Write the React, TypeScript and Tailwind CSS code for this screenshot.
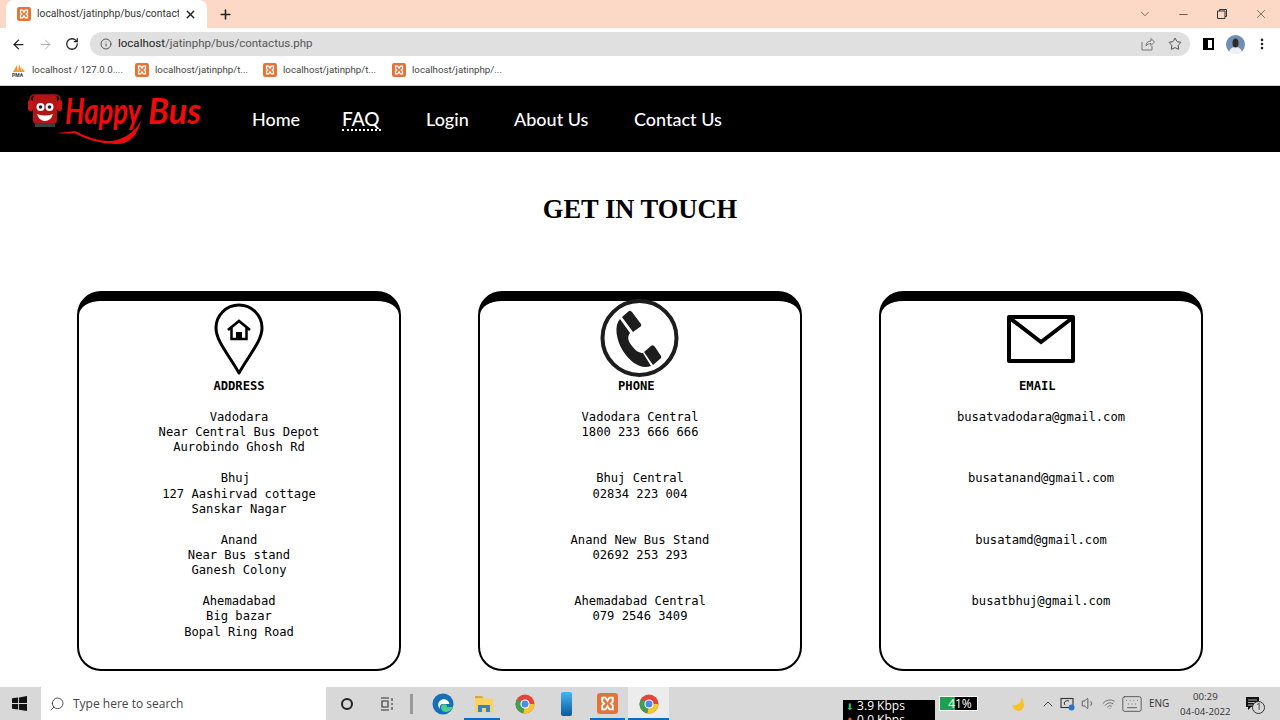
import {
  ArrowLeft,
  ArrowRight,
  ChevronDown,
  ChevronUp,
  Info,
  Keyboard,
  Minus,
  MoreVertical,
  Plus,
  RotateCw,
  Search,
  Star,
  Volume1,
  Wifi,
  X,
} from "lucide-react";

const XamppIcon = ({ size = 14 }: { size?: number }) => (
  <svg width={size} height={size} viewBox="0 0 16 16" className="shrink-0">
    <rect width="16" height="16" rx="2.5" fill="#e2743a" />
    <path
      d="M4 3.500h2.500L8 6l1.500-2.500H12v3L10.500 8l1.500 1.500v3H9.500L8 10l-1.500 2.500H4v-3L5.500 8 4 6.500z"
      fill="none"
      stroke="#fff"
      strokeWidth="1.400"
    />
  </svg>
);

const ChromeIcon = () => (
  <svg width="20" height="20" viewBox="0 0 20 20">
    <circle cx="10" cy="10" r="9.500" fill="#e5443a" />
    <path d="M10 10 1.800 5.300A9.500 9.500 0 0 0 8.500 19.400z" fill="#3da14e" />
    <path d="M10 10h9.500A9.500 9.500 0 0 1 8.500 19.400z" fill="#f5c430" />
    <circle cx="10" cy="10" r="4.600" fill="#fff" />
    <circle cx="10" cy="10" r="3.500" fill="#4a8ae8" />
  </svg>
);

const EdgeIcon = () => (
  <svg width="22" height="22" viewBox="0 0 22 22">
    <circle cx="11" cy="11" r="10.500" fill="#1570b8" />
    <path d="M21.500 11c0 4-3 8-7.500 8-3 0-5-2-5-4.500 0-3 3-4 5-3 1 .5 1 1.500.5 2.500H21z" fill="#4fce8a" />
    <path d="M10 6.500c3-1 7 .5 7.500 4.500H11c-2 0-4 2-3 5-3-3-2-8 2-9.500z" fill="#fff" />
  </svg>
);

const FolderIcon = () => (
  <svg width="20" height="20" viewBox="0 0 20 20">
    <path d="M1 2h7l2 2.500H1z" fill="#d8a93c" />
    <rect x="1" y="4.500" width="18" height="13.500" fill="#fbd35c" />
    <rect x="4" y="11" width="12" height="7" fill="#2f86c9" />
    <rect x="8" y="14" width="4" height="4" fill="#fbd35c" />
  </svg>
);

const Avatar = () => (
  <svg width="19" height="19" viewBox="0 0 19 19" className="ml-[12px] shrink-0">
    <circle cx="9.500" cy="9.500" r="9.500" fill="#6f8fb5" />
    <path d="M3 17c1-4 4-5 6.500-5s5.500 1 6.500 5a9.500 9.500 0 0 1-13 0z" fill="#f0f0f0" />
    <ellipse cx="9.500" cy="8" rx="3" ry="4.500" fill="#2e2a28" />
  </svg>
);

const Logo = () => (
  <svg width="210" height="66" viewBox="0 86 210 66" className="shrink-0">
    <rect x="28" y="100" width="5" height="11" rx="2" fill="#c81616" />
    <rect x="57" y="100" width="5" height="11" rx="2" fill="#c81616" />
    <path d="M30 100q0-5 5-5h20q5 0 5 5" fill="none" stroke="#a81212" strokeWidth="1.500" />
    <rect x="33" y="95" width="24" height="29" rx="4" fill="#b51414" />
    <rect x="35" y="123" width="20" height="4" fill="#3d3d3d" />
    <circle cx="40.500" cy="107" r="4" fill="#fff" />
    <circle cx="49.500" cy="107" r="4" fill="#fff" />
    <circle cx="40.500" cy="107" r="1.800" fill="#222" />
    <circle cx="49.500" cy="107" r="1.800" fill="#222" />
    <path d="M37 114q8 3 16 0q-2 7-8 7t-8-7z" fill="#fff" />
    <text
      x="65"
      y="124"
      textLength="76"
      lengthAdjust="spacingAndGlyphs"
      className="fill-[#ee0b0b] font-['Lato',sans-serif] text-[36px] font-bold italic"
    >
      Happy
    </text>
    <text
      x="148"
      y="124"
      textLength="53"
      lengthAdjust="spacingAndGlyphs"
      className="fill-[#ee0b0b] font-['Lato',sans-serif] text-[36px] font-bold italic"
    >
      Bus
    </text>
    <path
      d="M57 133q10-1 18-2 24 13 42 9 15-4 24-19-6 24-26 23-20 0-41-11-7 1-17 0z"
      fill="#e80c0c"
    />
  </svg>
);

const PinIcon = () => (
  <svg width="50" height="72" viewBox="0 0 50 72" className="shrink-0">
    <path
      d="M25 70C15 52 2 38 2 25a23 23 0 0 1 46 0C48 38 35 52 25 70z"
      fill="none"
      stroke="#000"
      strokeWidth="3"
      strokeLinejoin="round"
    />
    <path d="M14 27 25 18l11 9" fill="none" stroke="#000" strokeWidth="2.800" />
    <path d="M17.500 25v11h15V25" fill="none" stroke="#000" strokeWidth="2.500" />
    <rect x="22" y="29" width="6" height="7" fill="#000" />
  </svg>
);

const PhoneIcon = () => (
  <svg width="80" height="80" viewBox="0 0 80 80" className="-my-1 shrink-0">
    <circle cx="39.500" cy="39" r="37" fill="none" stroke="#1d1d1d" strokeWidth="4" />
    <path
      d="M20 20 30 34c-3 4-2 8 2 13s7 7 11 7l8 13c-10 4-21-4-28-15S14 26 20 20z"
      fill="#1d1d1d"
    />
    <path d="M22 18l7-6q1-1 3 1l9 12q1 2-1 3l-7 5z" fill="#1d1d1d" />
    <path d="M44 53l7-6q2-2 4 1l6 9q1 2-1 3l-7 6z" fill="#1d1d1d" />
  </svg>
);

const MailIcon = () => (
  <svg width="68" height="48" viewBox="0 0 68 48" className="shrink-0">
    <rect x="2" y="2" width="64" height="44" fill="none" stroke="#000" strokeWidth="4" strokeLinejoin="round" />
    <path d="M4 4 34 27 64 4" fill="none" stroke="#000" strokeWidth="4" />
  </svg>
);

const cards = [
  {
    title: "ADDRESS",
    icon: <PinIcon />,
    lines: [
      "Vadodara",
      "Near Central Bus Depot",
      "Aurobindo Ghosh Rd",
      "",
      "Bhuj ",
      "127 Aashirvad cottage",
      "Sanskar Nagar",
      "",
      "Anand",
      "Near Bus stand",
      "Ganesh Colony",
      "",
      "Ahemadabad",
      "Big bazar",
      "Bopal Ring Road",
    ],
  },
  {
    title: "PHONE ",
    icon: <PhoneIcon />,
    lines: [
      "Vadodara Central",
      "1800 233 666 666",
      "",
      "",
      "Bhuj Central",
      "02834 223 004",
      "",
      "",
      "Anand New Bus Stand",
      "02692 253 293",
      "",
      "",
      "Ahemadabad Central",
      "079 2546 3409",
    ],
  },
  {
    title: "EMAIL ",
    icon: <MailIcon />,
    lines: [
      "busatvadodara@gmail.com",
      "",
      "",
      "",
      "busatanand@gmail.com",
      "",
      "",
      "",
      "busatamd@gmail.com",
      "",
      "",
      "",
      "busatbhuj@gmail.com",
    ],
  },
];

export default function App() {
  return (
    <div className="flex h-[720px] w-[1280px] flex-col overflow-hidden bg-white font-['Roboto',sans-serif]">
      {/* Tab strip */}
      <div className="flex h-[28px] shrink-0 items-end bg-[#fcd9c7]">
        <div className="ml-[6px] flex h-[28px] w-[201px] items-center rounded-t-lg bg-white pl-[11px] pr-[8px]">
          <XamppIcon />
          <span className="ml-[6px] w-[142px] overflow-hidden text-[10.300px] whitespace-nowrap text-[#333]">
            localhost/jatinphp/bus/contactus.php
          </span>
          <X size={13} strokeWidth={2.5} className="ml-[5px] text-[#222]" />
        </div>
        <Plus size={15} strokeWidth={2.5} className="mb-[6px] ml-[11px] text-[#222]" />
        <div className="flex-1" />
        <div className="mb-[7px] flex items-center text-[#444]">
          <ChevronDown size={14} strokeWidth={1.2} />
          <Minus size={13} strokeWidth={1.5} className="ml-[25px]" />
          <svg width="10" height="10" viewBox="0 0 10 10" className="ml-[27px]">
            <path d="M.5 2h7.500v7.500H.5zM2.500 2V.5h7v7H8" fill="none" stroke="#333" strokeWidth="1" />
          </svg>
          <X size={14} strokeWidth={1.2} className="ml-[27px] mr-[12px]" />
        </div>
      </div>

      {/* Toolbar */}
      <div className="flex h-[29px] shrink-0 items-center pt-[3px]">
        <ArrowLeft size={15} strokeWidth={2} className="ml-[11px] text-[#222]" />
        <ArrowRight size={15} strokeWidth={1.5} className="ml-[12px] text-[#aaa]" />
        <RotateCw size={14} strokeWidth={2.2} className="ml-[12px] text-[#222]" />
        <div className="ml-[11px] flex h-[24px] w-[1100px] items-center rounded-full bg-[#e0e0e0] pl-[10px] pr-[8px]">
          <Info size={12} className="text-[#555]" />
          <span className="ml-[6px] text-[11.500px] text-[#555]">
            <span className="text-[#222]">localhost</span>/jatinphp/bus/contactus.php
          </span>
          <div className="flex-1" />
          <svg width="14" height="14" viewBox="0 0 14 14">
            <path d="M1 5v8h10V9M5 9c0-3 2-5 5-5V1.500L13.500 5 10 8.500V6.500C8 6.500 6 7.500 5 9z" fill="none" stroke="#777" strokeWidth="1" />
          </svg>
          <Star size={14} strokeWidth={1.6} className="ml-[13px] text-[#444]" />
        </div>
        <div className="ml-[13px] flex h-[12px] w-[11px] items-center justify-end border-2 border-black bg-black">
          <div className="h-full w-[4px] bg-white" />
        </div>
        <Avatar />
        <MoreVertical size={14} strokeWidth={2.5} className="ml-[10px] text-[#222]" />
      </div>

      {/* Bookmarks */}
      <div className="flex h-[29px] shrink-0 items-center border-b border-[#cfcfcf] pb-[2px] text-[9.700px] text-[#444]">
        <svg width="14" height="14" viewBox="0 0 14 14" className="ml-[12px]">
          <path d="M1 9 5 2l1 7zM6 9l1-8 3 8zM10 9 9 4l4 5z" fill="#ef9a2e" />
          <text x="0" y="14" className="fill-[#333] text-[5px] font-bold">PMA</text>
        </svg>
        <span className="ml-[6px] w-[97px]">localhost / 127.0.0....</span>
        <div className="ml-[6px]"><XamppIcon /></div>
        <span className="ml-[6px] w-[100px]">localhost/jatinphp/t...</span>
        <div className="ml-[8px]"><XamppIcon /></div>
        <span className="ml-[6px] w-[101px]">localhost/jatinphp/t...</span>
        <div className="ml-[8px]"><XamppIcon /></div>
        <span className="ml-[6px]">localhost/jatinphp/...</span>
      </div>

      {/* Site nav */}
      <nav className="flex h-[66px] shrink-0 items-center bg-black font-['Lato',sans-serif] text-[18px] font-medium text-white">
        <Logo />
        <div className="ml-[42px] flex items-center gap-[45px] whitespace-nowrap">
          <a className="w-[45px]">Home</a>
          <a className="w-[39px] border-b-2 border-dotted border-white text-[19px] leading-[21px]">FAQ</a>
          <a className="w-[43px]">Login</a>
          <a className="w-[75px]">About Us</a>
          <a>Contact Us</a>
        </div>
      </nav>

      {/* Content */}
      <main className="min-h-0 flex-1">
        <h1 className="mt-[41px] text-center font-['Liberation_Serif',serif] text-[26.500px] leading-[32px] font-bold text-black">
          GET IN TOUCH
        </h1>
        <div className="mt-[66px] flex justify-between pl-[77px] pr-[77px]">
          {cards.map((card) => (
            <section
              key={card.title}
              className="flex h-[380px] w-[324px] flex-col items-center rounded-[24px] border-2 border-t-[10px] border-black font-['DejaVu_Sans_Mono',monospace] text-[12.150px] leading-[15.360px] text-black"
            >
              <div className="flex h-[78px] shrink-0 items-center justify-center pb-[2px]">{card.icon}</div>
              <h2 className="font-bold whitespace-pre">{card.title}</h2>
              <div className="mt-[15.360px] flex flex-col items-center">
                {card.lines.map((line, i) => (
                  <p key={i} className="h-[15.360px] whitespace-pre">
                    {line}
                  </p>
                ))}
              </div>
            </section>
          ))}
        </div>
      </main>

      {/* Taskbar */}
      <footer className="flex h-[33px] shrink-0 items-center bg-[#d8d8d8] font-['Open_Sans',sans-serif] text-[#222]">
        <svg width="15" height="15" viewBox="0 0 16 16" className="ml-[12px]">
          <path d="M0 2.500 6.500 1.600V7.500H0zM7.500 1.500 16 0v7.500H7.500zM0 8.500h6.500v6L0 13.500zM7.500 8.500H16V16l-8.500-1.300z" fill="#111" />
        </svg>
        <div className="ml-[14px] flex h-[33px] w-[285px] items-center bg-white pl-[8px] text-[12px] text-[#444]">
          <Search size={16} strokeWidth={1.4} className="-scale-x-100" />
          <span className="ml-[8px]">Type here to search</span>
        </div>
        <div className="ml-[15px] h-[12px] w-[12px] rounded-full border-2 border-[#222]" />
        <svg width="14" height="14" viewBox="0 0 14 14" className="ml-[27px]">
          <path d="M1 1h8M1 13h8M2 4h6v6H2zM12 1v3M12 6v2M12 10v3" fill="none" stroke="#333" strokeWidth="1.100" />
        </svg>
        <div className="ml-[16px] h-[20px] w-[3px] bg-[#999]" />
        <div className="ml-[19px] flex h-[33px] w-[22px] items-center justify-center"><EdgeIcon /></div>
        <div className="relative ml-[10px] flex h-[33px] w-[40px] items-center justify-center">
          <FolderIcon />
          <div className="absolute right-[4px] bottom-0 left-0 h-[2px] bg-[#0a6fc2]" />
        </div>
        <div className="flex h-[33px] w-[41px] items-center justify-center"><ChromeIcon /></div>
        <div className="flex h-[33px] w-[42px] items-center justify-center">
          <div className="h-[24px] w-[11px] rounded-[2px] bg-gradient-to-b from-[#45b5f2] to-[#0b5a9e]" />
        </div>
        <div className="relative flex h-[33px] w-[41px] items-center justify-center">
          <XamppIcon size={21} />
          <div className="absolute inset-x-[3px] bottom-0 h-[2px] bg-[#0a6fc2]" />
        </div>
        <div className="relative flex h-[33px] w-[41px] items-center justify-center bg-[#ececec]">
          <ChromeIcon />
          <div className="absolute inset-x-0 bottom-0 h-[2px] bg-[#0a6fc2]" />
        </div>
        <div className="w-[174px]" />

        <div className="mt-[13px] h-[20px] w-[92px] shrink-0 overflow-hidden bg-black pl-[3px] text-[12px] leading-[11px] text-white">
          <p><span className="text-[9px] text-[#3fbf62]">⬇</span> 3.9 Kbps</p>
          <p className="mt-[2px]"><span className="text-[9px] text-[#e4572e]">⬆</span> 0.0 Kbps</p>
        </div>
        <div className="ml-[4px] flex h-[15px] w-[39px] shrink-0 overflow-hidden border border-white bg-black text-[12px] leading-[13px] text-white">
          <span className="w-[15px] bg-[#1fa04f] text-right">4</span>
          <span>1%</span>
        </div>
        <svg width="16" height="16" viewBox="0 0 16 16" className="ml-[32px] shrink-0">
          <path d="M11 1c1 6-3 9-9 8 1 4 4 6 7 6 5 0 7-8 2-14z" fill="#f7c22b" />
        </svg>
        <ChevronUp size={16} strokeWidth={1.3} className="ml-[14px] shrink-0 text-[#333]" />
        <svg width="15" height="14" viewBox="0 0 15 14" className="ml-[4px] shrink-0">
          <rect x="1" y="1.500" width="12" height="9" fill="none" stroke="#333" strokeWidth="1.100" />
          <path d="M5 8c-2-3 1-5 4-4" fill="none" stroke="#333" />
          <circle cx="11.500" cy="10.500" r="3" fill="#2a75c9" />
        </svg>
        <Volume1 size={15} strokeWidth={1.2} className="ml-[6px] shrink-0 text-[#333]" />
        <Wifi size={14} strokeWidth={1.2} className="ml-[6px] shrink-0 -rotate-12 text-[#555]" />
        <Keyboard size={22} strokeWidth={0.9} className="ml-[5px] shrink-0 text-[#444]" />
        <span className="ml-[6px] shrink-0 text-[10px] text-[#333]">ENG</span>
        <div className="ml-[10px] flex w-[52px] shrink-0 flex-col items-center text-[9.700px] leading-[15px] text-[#333]">
          <span>00:29</span>
          <span>04-04-2022</span>
        </div>
        <div className="relative ml-[15px] shrink-0">
          <svg width="14" height="14" viewBox="0 0 14 14">
            <path d="M0 0h13v10H5l-3 3v-3H0z" fill="#111" />
            <path d="M2 3h9M2 5.500h9M2 8h6" stroke="#d8d8d8" strokeWidth=".8" />
          </svg>
          <span className="absolute top-[4px] left-[6px] flex h-[13px] w-[13px] items-center justify-center rounded-full border border-[#333] bg-[#d8d8d8] text-[9px]">
            1
          </span>
        </div>
      </footer>
    </div>
  );
}
